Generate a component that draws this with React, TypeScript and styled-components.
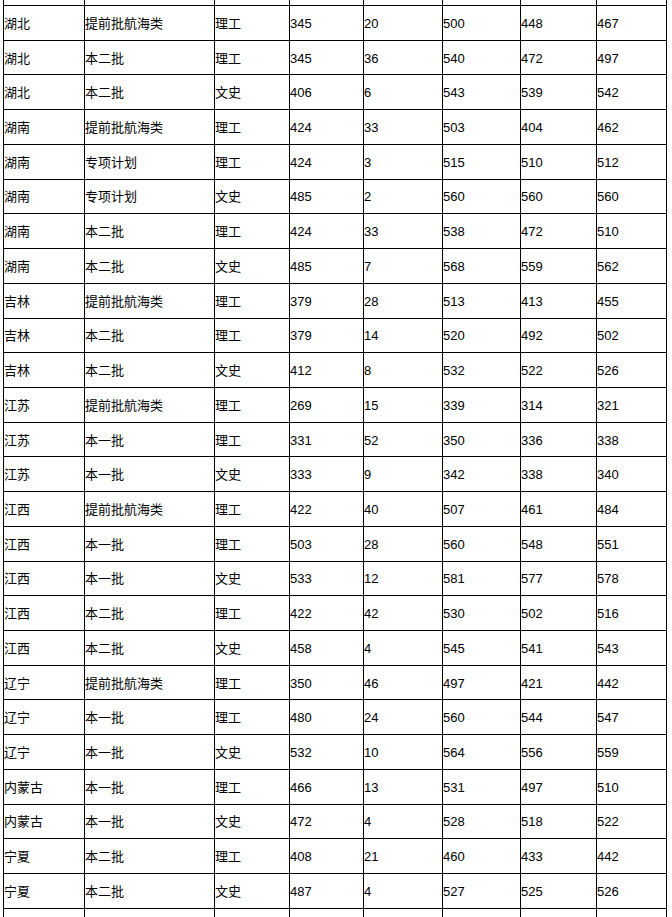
import React from "react";
import styled, { createGlobalStyle } from "styled-components";

const GlobalStyle = createGlobalStyle`
  html, body {
    margin: 0;
    padding: 0;
    background: #ffffff;
    overflow: hidden;
  }
`;

type Row = [string, string, string, number, number, number, number, number];

const rows: Row[] = [
  ["湖北", "提前批航海类", "理工", 345, 20, 500, 448, 467],
  ["湖北", "本二批", "理工", 345, 36, 540, 472, 497],
  ["湖北", "本二批", "文史", 406, 6, 543, 539, 542],
  ["湖南", "提前批航海类", "理工", 424, 33, 503, 404, 462],
  ["湖南", "专项计划", "理工", 424, 3, 515, 510, 512],
  ["湖南", "专项计划", "文史", 485, 2, 560, 560, 560],
  ["湖南", "本二批", "理工", 424, 33, 538, 472, 510],
  ["湖南", "本二批", "文史", 485, 7, 568, 559, 562],
  ["吉林", "提前批航海类", "理工", 379, 28, 513, 413, 455],
  ["吉林", "本二批", "理工", 379, 14, 520, 492, 502],
  ["吉林", "本二批", "文史", 412, 8, 532, 522, 526],
  ["江苏", "提前批航海类", "理工", 269, 15, 339, 314, 321],
  ["江苏", "本一批", "理工", 331, 52, 350, 336, 338],
  ["江苏", "本一批", "文史", 333, 9, 342, 338, 340],
  ["江西", "提前批航海类", "理工", 422, 40, 507, 461, 484],
  ["江西", "本一批", "理工", 503, 28, 560, 548, 551],
  ["江西", "本一批", "文史", 533, 12, 581, 577, 578],
  ["江西", "本二批", "理工", 422, 42, 530, 502, 516],
  ["江西", "本二批", "文史", 458, 4, 545, 541, 543],
  ["辽宁", "提前批航海类", "理工", 350, 46, 497, 421, 442],
  ["辽宁", "本一批", "理工", 480, 24, 560, 544, 547],
  ["辽宁", "本一批", "文史", 532, 10, 564, 556, 559],
  ["内蒙古", "本一批", "理工", 466, 13, 531, 497, 510],
  ["内蒙古", "本一批", "文史", 472, 4, 528, 518, 522],
  ["宁夏", "本二批", "理工", 408, 21, 460, 433, 442],
  ["宁夏", "本二批", "文史", 487, 4, 527, 525, 526],
];

const columnWidths = [81, 130, 75, 74, 79, 78, 76, 70];

const Page = styled.div`
  padding-left: 3px;
  height: 917px;
  overflow: hidden;
`;

const Table = styled.table`
  border-collapse: collapse;
  table-layout: fixed;
  width: 663px;
  margin-top: -29.7px;
  font-family: "Liberation Sans", "Noto Sans CJK SC", Arial, sans-serif;
  font-size: 13px;
  color: #000000;
`;

const Tr = styled.tr`
  height: 34.73px;
`;

const Td = styled.td`
  border: 1px solid #000000;
  padding: 2px 0 0 0;
  text-align: left;
  vertical-align: middle;
  white-space: nowrap;
  line-height: 16px;
`;

const emptyRow = ["", "", "", "", "", "", "", ""];

export default function App() {
  return (
    <>
      <GlobalStyle />
      <Page>
        <Table>
          <colgroup>
            {columnWidths.map((w, i) => (
              <col key={i} style={{ width: w }} />
            ))}
          </colgroup>
          <tbody>
            <Tr>
              {emptyRow.map((c, i) => (
                <Td key={i}>{c}</Td>
              ))}
            </Tr>
            {rows.map((row, r) => (
              <Tr key={r}>
                {row.map((cell, i) => (
                  <Td key={i}>{cell}</Td>
                ))}
              </Tr>
            ))}
            <Tr>
              {emptyRow.map((c, i) => (
                <Td key={i}>{c}</Td>
              ))}
            </Tr>
          </tbody>
        </Table>
      </Page>
    </>
  );
}
